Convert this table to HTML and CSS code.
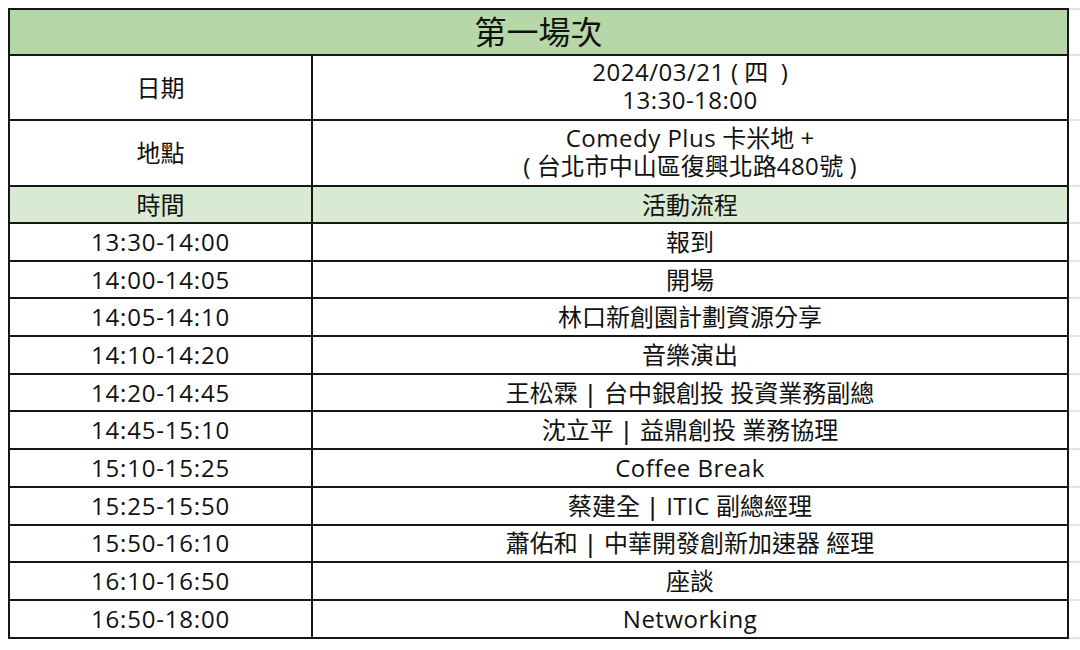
FILE: index.html
```html
<!DOCTYPE html>
<html lang="zh-Hant">
<head>
<meta charset="utf-8">
<title>第一場次</title>
<link rel="stylesheet" href="styles.css">
</head>
<body>
<div class="sheet">
  <div class="table">
    <div class="cell title span">第一場次</div>
    <div class="cell">日期</div>
    <div class="cell multi"><div class="line"><span class="lat">2024/03/21</span> (&nbsp;四&nbsp;&nbsp;)</div><div class="line lat">13:30-18:00</div></div>
    <div class="cell">地點</div>
    <div class="cell multi"><div class="line"><span class="lat">Comedy Plus</span> 卡米地 +</div><div class="line">( 台北市中山區復興北路<span class="lat">480</span>號 )</div></div>
    <div class="cell head">時間</div>
    <div class="cell head">活動流程</div>
    <div class="cell time">13:30-14:00</div><div class="cell">報到</div>
    <div class="cell time">14:00-14:05</div><div class="cell">開場</div>
    <div class="cell time">14:05-14:10</div><div class="cell">林口新創園計劃資源分享</div>
    <div class="cell time">14:10-14:20</div><div class="cell">音樂演出</div>
    <div class="cell time">14:20-14:45</div><div class="cell">王松霖<span class="bar">|</span>台中銀創投 投資業務副總</div>
    <div class="cell time">14:45-15:10</div><div class="cell">沈立平<span class="bar">|</span>益鼎創投 業務協理</div>
    <div class="cell time">15:10-15:25</div><div class="cell"><span class="lat">Coffee Break</span></div>
    <div class="cell time">15:25-15:50</div><div class="cell">蔡建全<span class="bar">|</span><span class="lat">ITIC</span>&nbsp;副總經理</div>
    <div class="cell time">15:50-16:10</div><div class="cell">蕭佑和<span class="bar">|</span>中華開發創新加速器 經理</div>
    <div class="cell time">16:10-16:50</div><div class="cell">座談</div>
    <div class="cell time">16:50-18:00</div><div class="cell"><span class="lat">Networking</span></div>
  </div>
  <div class="ghost">
    <div></div><div></div><div></div><div></div>
    <div></div><div></div><div></div><div></div><div></div><div></div>
    <div></div><div></div><div></div><div></div><div></div>
  </div>
</div>
</body>
</html>
```

FILE: styles.css
```css
html, body {
  margin: 0;
  padding: 0;
  background: #ffffff;
}

body {
  font-family: "Open Sans", "Noto Sans CJK TC", sans-serif;
  color: #111111;
  padding: 8px 0 0 8px;
}

.sheet {
  display: flex;
  align-items: flex-start;
}

.table,
.ghost {
  display: grid;
  grid-template-rows: 44px 63px 64px 35px repeat(11, 35.7px);
  row-gap: 2px;
  padding: 2px 0;
}

.table {
  grid-template-columns: 301px 754px;
  column-gap: 2px;
  padding: 2px;
  background: #161616;
}

.ghost {
  grid-template-columns: 12px;
  background: #e4e4e4;
}

.ghost div {
  background: #ffffff;
}

.cell {
  background: #ffffff;
  display: flex;
  align-items: center;
  justify-content: center;
  font-size: 24px;
  line-height: 28px;
  white-space: nowrap;
}

.span {
  grid-column: 1 / 3;
}

.title {
  background: #b6d7a8;
  font-size: 32px;
  line-height: 36px;
  padding-bottom: 1px;
}

.head {
  background: #d9ead3;
}

.multi {
  flex-direction: column;
  padding-bottom: 3px;
}

.line {
  display: block;
  height: 28px;
  overflow: visible;
}

.time {
  letter-spacing: 0.8px;
}

.lat {
  letter-spacing: 0.5px;
}

.bar {
  font-family: "Noto Sans", sans-serif;
  font-weight: 500;
  padding: 0 7px 0 6px;
}
```
